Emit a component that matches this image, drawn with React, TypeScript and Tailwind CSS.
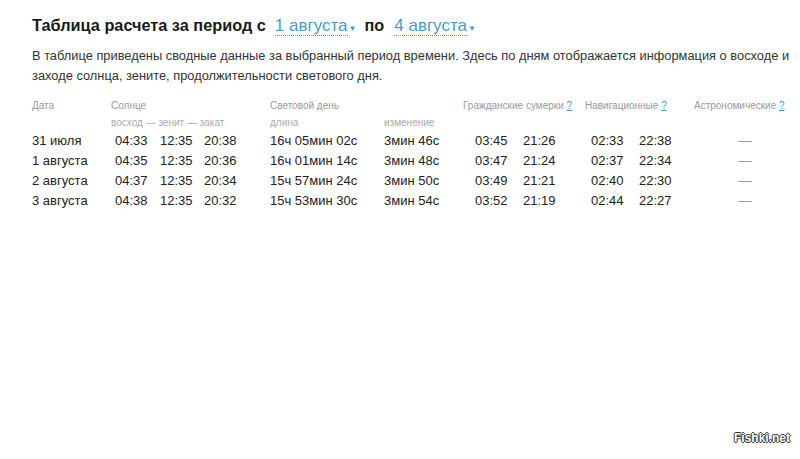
import React from 'react';

const ROWS = [
  { date: '31 июля', sun: ['04:33', '12:35', '20:38'], len: '16ч 05мин 02с', diff: '3мин 46с', civil: ['03:45', '21:26'], nav: ['02:33', '22:38'] },
  { date: '1 августа', sun: ['04:35', '12:35', '20:36'], len: '16ч 01мин 14с', diff: '3мин 48с', civil: ['03:47', '21:24'], nav: ['02:37', '22:34'] },
  { date: '2 августа', sun: ['04:37', '12:35', '20:34'], len: '15ч 57мин 24с', diff: '3мин 50с', civil: ['03:49', '21:21'], nav: ['02:40', '22:30'] },
  { date: '3 августа', sun: ['04:38', '12:35', '20:32'], len: '15ч 53мин 30с', diff: '3мин 54с', civil: ['03:52', '21:19'], nav: ['02:44', '22:27'] },
];

function DateLink({ children }: { children: React.ReactNode }) {
  return (
    <span className="inline-flex items-baseline text-[#4b9bc6] font-normal text-[17px]">
      <span className="border-b border-dotted border-[#4b9bc6] leading-[18px]">{children}</span>
      <span className="text-[8px] ml-[1px]">▼</span>
    </span>
  );
}

function Help() {
  return <span className="text-[#4b9bc6] underline">?</span>;
}

export default function App() {
  return (
    <div className="w-[800px] h-[459px] bg-white relative font-[family-name:Liberation_Sans,Arial,sans-serif] text-[#222]">
      <div className="pl-[32px] pt-[14px]">
        <h1 className="text-[16.3px] font-bold leading-[22px] text-[#1a1a1a] flex items-baseline gap-[6px]">
          <span>Таблица расчета за период с</span>
          <span className="ml-[3px]"><DateLink>1 августа</DateLink></span>
          <span className="ml-[2px]">по</span>
          <span className="ml-[4px]"><DateLink>4 августа</DateLink></span>
        </h1>
        <p className="mt-[6px] text-[12.85px] leading-[20px] text-[#333] w-[762px]">
          В таблице приведены сводные данные за выбранный период времени. Здесь по дням отображается информация о восходе и заходе солнца, зените, продолжительности светового дня.
        </p>

        <div className="mt-[11px] text-[10px] leading-[17px] text-[#9a9a9a]">
          <div className="flex">
            <div className="w-[79px]">Дата</div>
            <div className="w-[159px]">Солнце</div>
            <div className="w-[114px]">Световой день</div>
            <div className="w-[79px]"></div>
            <div className="w-[122px]">Гражданские сумерки <Help /></div>
            <div className="w-[109px]">Навигационные <Help /></div>
            <div>Астрономические <Help /></div>
          </div>
          <div className="flex text-[#aaa]">
            <div className="w-[79px]"></div>
            <div className="w-[159px]">восход — зенит — закат</div>
            <div className="w-[114px]">длина</div>
            <div className="w-[79px]">изменение</div>
          </div>
        </div>

        <div className="text-[13px] leading-[20px]">
          {ROWS.map((r) => (
            <div key={r.date} className="flex">
              <div className="w-[79px]">{r.date}</div>
              <div className="w-[159px] flex pl-[4px]">
                <span className="w-[45px]">{r.sun[0]}</span>
                <span className="w-[44px]">{r.sun[1]}</span>
                <span>{r.sun[2]}</span>
              </div>
              <div className="w-[114px]">{r.len}</div>
              <div className="w-[79px]">{r.diff}</div>
              <div className="w-[122px] flex pl-[12px]">
                <span className="w-[48px]">{r.civil[0]}</span>
                <span>{r.civil[1]}</span>
              </div>
              <div className="w-[109px] flex pl-[6px]">
                <span className="w-[48px]">{r.nav[0]}</span>
                <span>{r.nav[1]}</span>
              </div>
              <div className="w-[102px] text-center text-[#999]">—</div>
            </div>
          ))}
        </div>
      </div>

      <div className="absolute right-[10px] bottom-[12px] text-[12px] font-bold text-white [text-shadow:_-1px_0_#333,1px_0_#333,0_-1px_#333,0_1px_#333]">
        Fishki.net
      </div>
    </div>
  );
}
